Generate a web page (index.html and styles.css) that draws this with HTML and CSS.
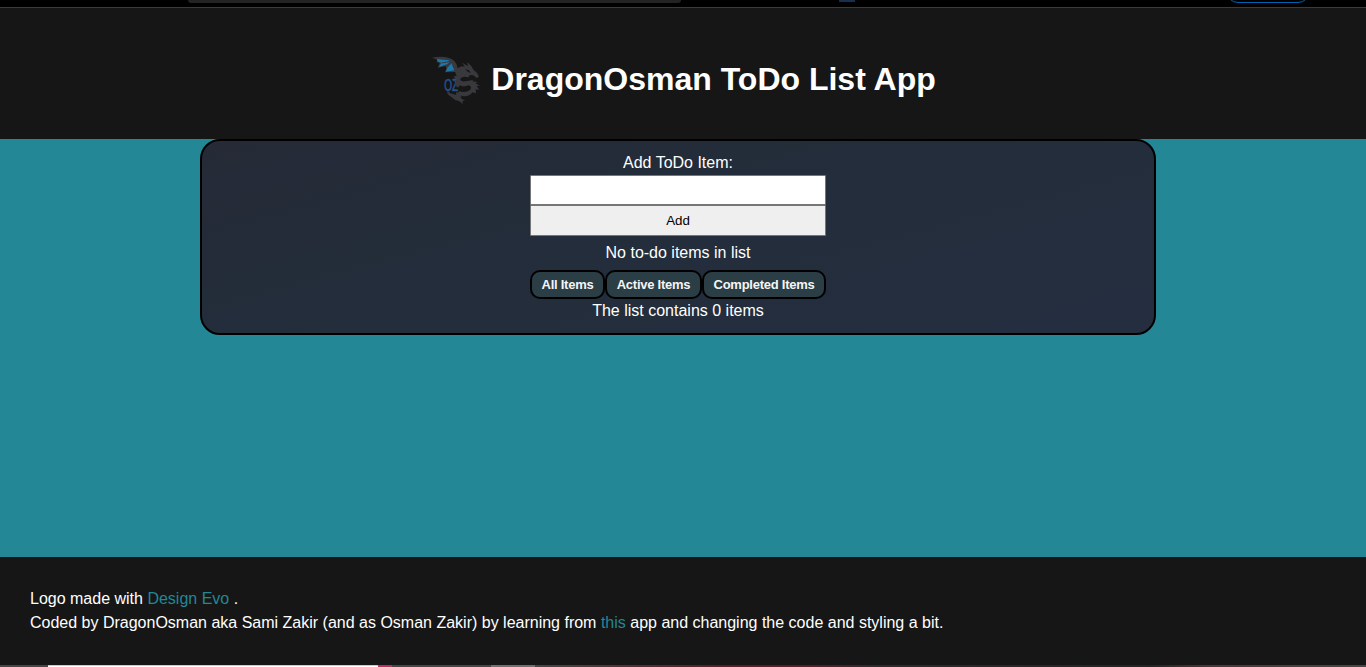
FILE: index.html
```html
<!DOCTYPE html>
<html lang="en">
<head>
<meta charset="utf-8">
<title>DragonOsman ToDo List App</title>
<link rel="stylesheet" href="styles.css">
</head>
<body>
<div class="toolbar"><span class="address"></span><span class="badge"></span><span class="pill"></span></div>
<header class="header">
  <svg class="logo" viewBox="0 0 192 180" aria-hidden="true">
    <path fill="#39393d" d="M21 23C47 18 74 20 88 33Q97 42 98 55Q109 46 119 50L112 38Q123 46 130 47L125 37Q139 44 144 58L156 69 162 80 155 84 145 76 135 75 130 82 118 80Q104 82 106 90Q109 97 127 93L147 89 141 94 158 96 151 100 165 107 155 108 163 119 152 118 153 130 142 127Q134 140 116 139L103 136 111 148 121 150 112 154 114 162 103 154Q88 151 76 139Q63 131 68 122Q77 133 94 135L93 127 99 129 103 124Q123 130 136 119Q142 107 130 106Q112 114 99 102L88 105 93 97 83 93 92 88 86 79 95 77 90 66 60 67 64 57 62 48 38 53 44 39 34 36 39 30Z"/>
    <path fill="#1c77ab" d="M36 27L80 31 66 43 42 51 49 38 37 34ZM79 39L88 61 62 65 68 52Z"/>
    <path fill="none" stroke="#39393d" stroke-width="3" d="M34 25Q65 26 86 34M83 33L50 39M84 34L66 52"/>
    <text class="monogram" transform="translate(58 124) scale(.6 1)">OZ</text>
    <path fill="#39393d" d="M90 90L103 84 106 104 99 113 93 108 88 105 93 97ZM68 120Q77 133 96 136L93 127 99 129 103 124 110 140 90 142Z"/>
    <path fill="#161616" d="M121 57L131 61 138 69 128 65Z"/>
  </svg>
  <h1 class="title">DragonOsman ToDo List App</h1>
</header>
<main class="main">
  <section class="card">
    <form class="form">
      <label class="label" for="item">Add ToDo Item:</label>
      <input class="field" id="item" type="text">
      <button class="add" type="button">Add</button>
    </form>
    <p class="empty">No to-do items in list</p>
    <div class="filters">
      <button class="filter all" type="button">All Items</button>
      <button class="filter active" type="button">Active Items</button>
      <button class="filter completed" type="button">Completed Items</button>
    </div>
    <p class="count">The list contains 0 items</p>
  </section>
</main>
<footer class="footer">
  <p>Logo made with <a class="link">Design Evo</a> .</p>
  <p>Coded by DragonOsman aka Sami Zakir (and as Osman Zakir) by learning from <a class="link">this</a> app and changing the code and styling a bit.</p>
</footer>
<div class="taskbar"><span class="search"></span><span class="tile"></span><span class="window"></span></div>
</body>
</html>
```
FILE: styles.css
```css
* { box-sizing: border-box; }
body {
  margin: 0;
  height: 667px;
  display: flex;
  flex-direction: column;
  overflow: hidden;
  background: #161616;
  color: #fff;
  font: 16px/24px "Liberation Sans", Arial, sans-serif;
}
p, h1 { margin: 0; }
.toolbar {
  flex: none;
  height: 8px;
  display: flex;
  align-items: flex-start;
  overflow: hidden;
  background: #000;
  border-bottom: 1px solid #3b3b3b;
}
.address { width: 493px; height: 3px; margin-left: 188px; background: #232323; border-radius: 0 0 3px 3px; }
.badge { width: 16px; height: 2px; margin-left: 158px; background: #192f50; }
.pill { width: 84px; height: 24px; margin: -21px 0 0 371px; border: 1px solid #0063b1; border-radius: 12px; }
.header {
  flex: none;
  height: 131px;
  display: flex;
  align-items: center;
  justify-content: center;
  padding: 0 5px 0 0;
}
.logo { width: 64px; height: 60px; margin-top: 13px; }
.monogram { font: 50px "Liberation Sans", Arial, sans-serif; fill: #24528a; stroke: #24528a; stroke-width: 2px; }
.title { margin: 11px 0 0 2px; font-size: 32px; line-height: 40px; font-weight: 700; white-space: nowrap; }
.main { flex: none; height: 418px; background: #238795; }
.card {
  width: 956px;
  height: 196px;
  margin-left: 200px;
  padding-top: 10px;
  display: flex;
  flex-direction: column;
  align-items: center;
  border: 2px solid #000;
  border-radius: 20px;
  background: linear-gradient(165deg, #252a36, #232d3b 50%, #242e40);
}
.form { width: 296px; display: flex; flex-direction: column; }
.label { text-align: center; }
.field { width: 100%; height: 30px; border: 1px solid #767676; border-radius: 1px; background: #fff; }
.add {
  height: 31px;
  padding: 0;
  border: 1px solid #767676;
  border-radius: 1px;
  background: #efefef;
  color: #000;
  font: 13.333px "Liberation Sans", Arial, sans-serif;
}
.empty { margin-top: 5px; }
.filters { display: flex; margin-top: 5px; }
.filter {
  height: 29px;
  padding: 0;
  border: 2px solid #000;
  border-radius: 10px;
  background: #2b3d45;
  color: #f5f5f5;
  font: bold 13px "Liberation Sans", Arial, sans-serif;
  letter-spacing: -0.25px;
  white-space: nowrap;
}
.all { width: 75px; }
.active { width: 97px; }
.completed { width: 124px; }
.footer { flex: none; height: 108px; padding: 30px 30px 0; }
.link { color: #238795; }
.taskbar {
  flex: none;
  height: 2px;
  display: flex;
  background: linear-gradient(90deg, #464646 540px, #54202a 720px, #54202a 810px, #302a2d 870px, #242424 1150px, #49383a 1210px, #484646 1366px);
}
.search { width: 330px; margin-left: 48px; background: #fff; border-top: 1px solid #ccc; }
.tile { width: 14px; background: #bd2c62; }
.window { width: 44px; margin-left: 99px; background: #707070; }
```
